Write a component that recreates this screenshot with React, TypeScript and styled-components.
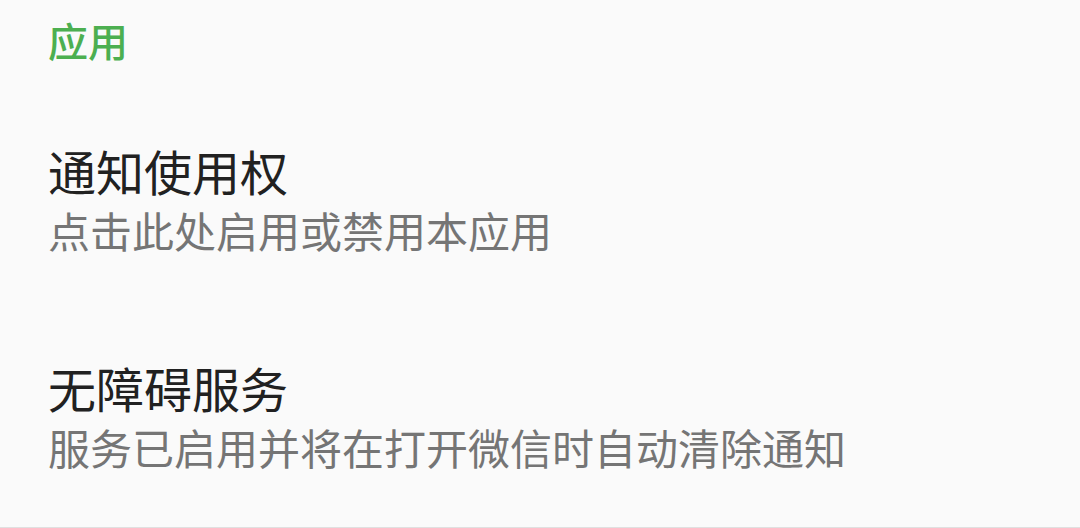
import React from 'react';
import styled, { createGlobalStyle } from 'styled-components';

const GlobalStyle = createGlobalStyle`
  html, body {
    margin: 0;
    padding: 0;
    background: #fafafa;
  }
  body {
    font-family: 'Noto Sans CJK SC', 'Noto Sans', sans-serif;
  }
`;

const items = [
  { title: '通知使用权', summary: '点击此处启用或禁用本应用' },
  { title: '无障碍服务', summary: '服务已启用并将在打开微信时自动清除通知' },
];

const App = () => (
  <>
    <GlobalStyle />
    <Screen>
      <Category>应用</Category>
      {items.map(item => (
        <Pref key={item.title}>
          <Title>{item.title}</Title>
          <Summary>{item.summary}</Summary>
        </Pref>
      ))}
    </Screen>
  </>
);

export default App;

const Screen = styled.div`
  width: 1080px;
  height: 528px;
  display: flex;
  flex-direction: column;
  overflow: hidden;
  border-bottom: 1px solid #e0e0e0;
  box-sizing: border-box;
`;

const Category = styled.div`
  height: 93px;
  padding: 0 48px 13px;
  display: flex;
  align-items: center;
  box-sizing: border-box;
  font-size: 40px;
  font-weight: 500;
  color: #4caf50;
`;

const Pref = styled.div`
  height: 217px;
  padding: 0 48px 4px;
  display: flex;
  flex-direction: column;
  justify-content: center;
  box-sizing: border-box;
`;

const Title = styled.div`
  font-size: 48px;
  line-height: 60px;
  color: #212121;
`;

const Summary = styled.div`
  font-size: 42px;
  line-height: 60px;
  color: #757575;
`;
